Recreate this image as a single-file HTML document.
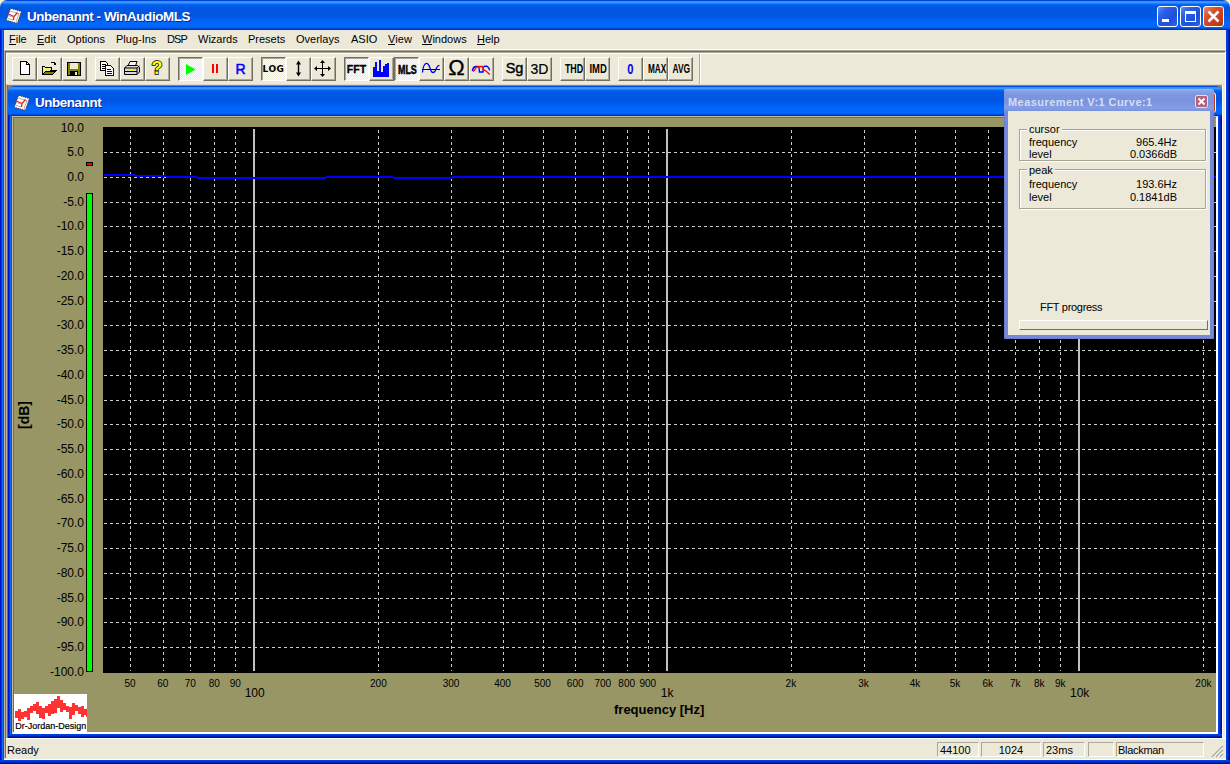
<!DOCTYPE html><html><head><meta charset="utf-8"><title>Unbenannt - WinAudioMLS</title><style>
html,body{margin:0;padding:0}
body{width:1230px;height:764px;position:relative;overflow:hidden;background:#0b3fd6;font-family:"Liberation Sans",sans-serif;font-size:11px;color:#000}
div,span,svg{position:absolute;box-sizing:border-box}
span{white-space:nowrap;line-height:1}
.cap{background:linear-gradient(to bottom,#0046d8 0px,#0046d8 1px,#358cfa 1px,#3d95ff 2.5px,#1a7eff 3.5px,#0468f6 4.5px,#025fec 5.5px,#0058e4 7px,#0056e2 15px,#005aea 17.5px,#0060f4 19.5px,#0066fc 22px,#0066fc 26.5px,#0060f2 27.5px,#004cd8 28.5px,#0032b4 29.5px,#002ea8 30px)}
.ttl{color:#fff;font-weight:bold;font-size:13.4px;letter-spacing:-.41px;text-shadow:1px 1px 0 #0a2a8c}
.m{top:34px;font-size:11px;height:12px}
.m u{text-decoration:none;display:inline-block;height:10px;border-bottom:1px solid #000}
.b{width:25px;height:24px;top:57px;background:#ece9d8;border-top:1px solid #fff;border-left:1px solid #fff;border-right:1px solid #716f64;border-bottom:1px solid #716f64;box-shadow:inset -1px -1px 0 #aca899}
.b.p{border-top:1px solid #716f64;border-left:1px solid #716f64;border-right:1px solid #fff;border-bottom:1px solid #fff;box-shadow:inset 1px 1px 0 #aca899;background:repeating-conic-gradient(#fff 0 25%,#ece9d8 0 50%) 0 0/2px 2px}
.b svg{left:0;top:0}
.bt{font-weight:bold;font-size:11px;left:0;width:23px;text-align:center;top:5px}
.yl{font-size:12px;width:60px;text-align:right;left:24px;height:12px}
.xs{font-size:10px;width:40px;text-align:center;height:10px;top:679px}
.xb{font-size:12px;width:40px;text-align:center;height:12px;top:687px}
.sp{top:742px;height:15px;border-top:1px solid #aca899;border-left:1px solid #aca899;border-right:1px solid #fff;border-bottom:1px solid #fff}
.st{top:745px;font-size:11px}
.pt{font-size:11px;height:11px}
.gb{border:1px solid #a8a594;box-shadow:1px 1px 0 #fff, inset 1px 1px 0 #fff}
</style></head><body>
<div style="left:0;top:0;width:1230px;height:10px;background:#f6f0cc"></div>
<div class="cap" style="left:0;top:0;width:1230px;height:30px;border-radius:7px 7px 0 0"></div>
<div style="left:0;top:30px;width:4px;height:734px;background:linear-gradient(to right,#0013d0 0,#0013d0 1px,#0831d9 1px,#0831d9 2px,#166aee 2px,#166aee 3px,#0050e0 3px)"></div>
<div style="left:1226px;top:30px;width:4px;height:734px;background:linear-gradient(to right,#0040e8 0,#0040e8 1px,#0038d8 1px,#0038d8 2px,#0020b0 2px,#0020b0 3px,#001090 3px)"></div>
<div style="left:0;top:760px;width:1230px;height:4px;background:linear-gradient(to bottom,#0040e8 0,#0040e8 1px,#0038d8 1px,#0038d8 2px,#0020b0 2px,#0020b0 3px,#001090 3px)"></div>
<div style="left:4px;top:30px;width:1222px;height:730px;background:#ece9d8"></div>
<svg style="left:5px;top:7px" width="18" height="18" viewBox="0 0 18 18"><path d="M5.5 1.200 L16.5 4.5 L12.4 16.5 L1.200 13.3 Z" fill="#fff" stroke="#3a3a3a" stroke-width="1" stroke-dasharray="1.5 .7"/><path d="M13.800 6.5 L11 15.5 M4.5 3.800 L14.5 6.800 M3 8.5 L9 10.3 M3 11.5 L8.5 13" stroke="#777" stroke-width=".6" fill="none"/><path d="M3.5 7 L9 9.5 M12.5 5.5 L9 9.5 L8.5 13" stroke="#f02020" stroke-width="1.300" fill="none"/></svg>
<span class="ttl" style="left:27px;top:10px" id="t1">Unbenannt - WinAudioMLS</span>
<div style="left:1157px;top:6px;width:21px;height:21px;border:1px solid #fff;border-radius:3px;background:linear-gradient(135deg,#5d8bf5 0%,#2a5fe6 30%,#1f4fd8 65%,#2a63ee 100%)"><div style="left:4px;top:12px;width:7px;height:3px;background:#fff"></div></div>
<div style="left:1180px;top:6px;width:21px;height:21px;border:1px solid #fff;border-radius:3px;background:linear-gradient(135deg,#5d8bf5 0%,#2a5fe6 30%,#1f4fd8 65%,#2a63ee 100%)"><div style="left:4px;top:4px;width:11px;height:11px;border:1px solid #fff;border-top:3px solid #fff"></div></div>
<div style="left:1203px;top:6px;width:21px;height:21px;border:1px solid #fff;border-radius:3px;background:linear-gradient(135deg,#e98b6f 0%,#d8502c 35%,#c83c18 70%,#b5340f 100%)"><svg style="left:0;top:0" width="19" height="19" viewBox="0 0 19 19"><path d="M4.5 4.5 L14.5 14.5 M14.5 4.5 L4.5 14.5" stroke="#fff" stroke-width="2.5" stroke-linecap="butt"/></svg></div>
<span class="m" id="m0" style="left:9px"><u>F</u>ile</span>
<span class="m" id="m1" style="left:37px"><u>E</u>dit</span>
<span class="m" id="m2" style="left:67px">Options</span>
<span class="m" id="m3" style="left:116px">Plug-Ins</span>
<span class="m" id="m4" style="left:167px;letter-spacing:-.9px">DSP</span>
<span class="m" id="m5" style="left:198px">Wizards</span>
<span class="m" id="m6" style="left:248px">Presets</span>
<span class="m" id="m7" style="left:296px">Overlays</span>
<span class="m" id="m8" style="left:351px">ASIO</span>
<span class="m" id="m9" style="left:388px"><u>V</u>iew</span>
<span class="m" id="m10" style="left:422px"><u>W</u>indows</span>
<span class="m" id="m11" style="left:477px"><u>H</u>elp</span>
<div style="left:4px;top:49px;width:1222px;height:1px;background:#fff"></div>
<div style="left:4px;top:50px;width:1222px;height:1px;background:#aca899"></div>
<div style="left:5px;top:51px;width:1220px;height:1px;background:#716f64"></div>
<div style="left:5px;top:52px;width:1220px;height:1px;background:#aca899"></div>
<div style="left:6px;top:53px;width:1219px;height:1px;background:#fff"></div>
<div style="left:4px;top:51px;width:1px;height:707px;background:#bcb6a2"></div>
<div style="left:5px;top:51px;width:1px;height:707px;background:#716f64"></div>
<div style="left:6px;top:53px;width:1px;height:31px;background:#fff"></div>
<div style="left:699px;top:54px;width:1px;height:30px;background:#aca899"></div>
<div style="left:700px;top:53px;width:1px;height:31px;background:#fff"></div>
<div class="b" style="left:12px"><svg width="22" height="22" viewBox="0 0 22 22" shape-rendering="crispEdges"><path d="M7.5 3.5 H13.5 L16.5 6.5 V16.5 H7.5 Z" fill="#fff" stroke="#000"/><path d="M13.5 3.5 V6.5 H16.5" fill="none" stroke="#000"/></svg></div>
<div class="b" style="left:37px"><svg width="22" height="22" viewBox="0 0 22 22" shape-rendering="crispEdges"><path d="M4.5 9.5 V16.5 H14.5 L18.5 12.5 H8.5 L5.5 15.5" fill="#808000" stroke="#000"/><path d="M4.5 16 V8.5 H6.5 L7.5 9.5 H13.5 V12" fill="#f4f080" stroke="#000"/><path d="M8 13 H18 L14.5 16.5 H5 Z" fill="#808000" stroke="#000"/><path d="M12.5 5.5 Q15.5 2.5 17.5 6.5 M17.5 6.5 V4.5 M17.5 6.5 H15.5" fill="none" stroke="#000"/></svg></div>
<div class="b" style="left:62px"><svg width="22" height="22" viewBox="0 0 22 22" shape-rendering="crispEdges"><rect x="4.5" y="4.5" width="13" height="13" fill="#808000" stroke="#000"/><rect x="7" y="5" width="8" height="6" fill="#ece9d8"/><rect x="7" y="13" width="8" height="4" fill="#000"/><rect x="12" y="14" width="2" height="3" fill="#ece9d8"/></svg></div>
<div class="b" style="left:95px"><svg width="22" height="22" viewBox="0 0 22 22" shape-rendering="crispEdges"><path d="M4.5 3.5 H9.5 L11.5 5.5 V12.5 H4.5 Z" fill="#fff" stroke="#000"/><path d="M6 6.5 H10 M6 8.5 H10 M6 10.5 H10" stroke="#000"/><path d="M9.5 7.5 H14.5 L17.5 10.5 V17.5 H9.5 Z" fill="#fff" stroke="#000080"/><path d="M11 11.5 H15 M11 13.5 H16 M11 15.5 H16" stroke="#000080"/></svg></div>
<div class="b" style="left:120px"><svg width="22" height="22" viewBox="0 0 22 22"><path d="M7 8 L9 3.5 H16 L14.5 8" fill="#fff" stroke="#000"/><path d="M3.5 10 L6 7.5 H16.5 L18.5 9.5 V14 L16 16.5 H3.5 Z" fill="#d8d8d0" stroke="#000"/><path d="M3.5 10 H16 L18.5 8 M16 10 V16.5 M3.5 13.5 H16" fill="none" stroke="#000"/><rect x="8" y="12" width="4" height="1" fill="#ff0"/></svg></div>
<div class="b" style="left:145px"><span style="left:0;top:1px;width:22px;text-align:center;font-weight:bold;font-size:18px;color:#ff0;-webkit-text-stroke:1.5px #000;paint-order:stroke fill;font-family:'Liberation Sans',sans-serif">?</span></div>
<div class="b p" style="left:178px"><svg width="22" height="22" viewBox="0 0 22 22"><path d="M7 6 L16.5 11.5 L7 17 Z" fill="#0f0"/></svg></div>
<div class="b" style="left:203px"><svg width="22" height="22" viewBox="0 0 22 22" shape-rendering="crispEdges"><rect x="8" y="6" width="2" height="9" fill="#f00"/><rect x="12" y="6" width="2" height="9" fill="#f00"/></svg></div>
<div class="b" style="left:228px"><span style="left:0;top:4px;width:23px;text-align:center;font-size:14px;color:#00f;-webkit-text-stroke:.5px #00f">R</span></div>
<div class="b p" style="left:261px"><span class="bt" style="font-size:9px;top:7px;letter-spacing:.5px;font-family:'DejaVu Sans',sans-serif">LOG</span></div>
<div class="b" style="left:286px"><svg width="22" height="22" viewBox="0 0 22 22"><path d="M11.5 5 V17" stroke="#000" stroke-width="1.4"/><path d="M11.5 2.5 L14 6.5 H9 Z M11.5 18.5 L14 14.5 H9 Z" fill="#000"/></svg></div>
<div class="b" style="left:311px"><svg width="22" height="22" viewBox="0 0 22 22" shape-rendering="crispEdges"><path d="M10.5 4 V17 M4 10.5 H17" stroke="#000" stroke-width="1"/><path d="M10.5 2 L13 5 H8 Z M10.5 19 L13 16 H8 Z M2 10.5 L5 8 V13 Z M19 10.5 L16 8 V13 Z" fill="#000" shape-rendering="auto"/></svg></div>
<div class="b p" style="left:344px"><span class="bt" style="font-size:11.5px;top:6px;transform:scaleX(.92);-webkit-text-stroke:.3px #000">FFT</span></div>
<div class="b" style="left:369px"><svg width="22" height="22" viewBox="0 0 22 22" shape-rendering="crispEdges"><path d="M3 19 V9 H5 V4 H7 V13 H9 V2 H11 V14 H13 V8 H15 V6 H17 V5 H19 V19 Z" fill="#00f"/></svg></div>
<div class="b p" style="left:394px"><span class="bt" style="font-size:12px;top:6px;transform:scaleX(.74);-webkit-text-stroke:.5px #000">MLS</span></div>
<div class="b" style="left:419px"><svg width="22" height="22" viewBox="0 0 22 22"><path d="M2 11.5 H20" stroke="#000" stroke-width="1"/><path d="M2.5 14.5 C3.5 3.5 8 3 10 10 C11.5 16 14.5 16 16.5 10 C17.3 8 18.5 7.3 19.5 7.300" fill="none" stroke="#00f" stroke-width="1.3"/></svg></div>
<div class="b" style="left:444px"><span style="left:0;top:-1px;width:23px;text-align:center;font-size:22px;-webkit-text-stroke:.3px #000">Ω</span></div>
<div class="b" style="left:469px"><svg width="22" height="22" viewBox="0 0 22 22"><path d="M2.3 12.8 Q3 9 5.5 8.5 H8 Q9.3 8.5 9.4 14 H13 Q13.2 8.5 14.5 8.3 H17 Q19 9 19.7 12.3" fill="none" stroke="#00f" stroke-width="1.4"/><path d="M2.7 13.4 Q4.5 13 6 9.4 Q8 8.3 12 8.5 Q13 9 13.5 11.9 Q16 12.5 19.7 16.4" fill="none" stroke="#f00" stroke-width="1.4"/></svg></div>
<div class="b" style="left:502px"><span style="left:0;top:3px;width:23px;text-align:center;font-size:14.5px;-webkit-text-stroke:.4px #000">Sg</span></div>
<div class="b" style="left:527px"><span style="left:0;top:4px;width:23px;text-align:center;font-size:14px;-webkit-text-stroke:.2px #000">3D</span></div>
<div class="b" style="left:560px"><span class="bt" style="font-size:13.5px;top:4px;transform:scaleX(.66)">THD</span></div>
<div class="b" style="left:585px"><span class="bt" style="font-size:13.5px;top:4px;transform:scaleX(.7)">IMD</span></div>
<div class="b" style="left:618px"><span class="bt" style="font-size:14px;top:4px;color:#00f;transform:scaleX(.8)">0</span></div>
<div class="b" style="left:643px"><span class="bt" style="font-size:12.5px;top:5px;transform:scaleX(.66)">MAX</span></div>
<div class="b" style="left:668px"><span class="bt" style="font-size:12px;top:5px;transform:scaleX(.7)">AVG</span></div>
<div style="left:6px;top:84px;width:1219px;height:654px;background:#ece9d8"></div>
<div style="left:6px;top:84px;width:1218px;height:1px;background:#dcd8c6"></div>
<div style="left:6px;top:85px;width:1216px;height:1px;background:#8c8878"></div>
<div style="left:6px;top:84px;width:1px;height:654px;background:#b4b0a0"></div>
<div style="left:7px;top:85px;width:1px;height:653px;background:#6e6a5c"></div>
<div style="left:8px;top:86px;width:1214px;height:8px;background:#808080"></div>
<div style="left:1222px;top:85px;width:1px;height:653px;background:#fff"></div>
<div style="left:1225px;top:52px;width:1px;height:686px;background:#fff"></div>
<div style="left:8px;top:86px;width:1214px;height:652px;border-radius:7px 7px 0 0;background:#0a50e0"></div>
<div class="cap" style="left:8px;top:86px;width:1214px;height:30px;border-radius:7px 7px 0 0"></div>
<div style="left:8px;top:116px;width:4px;height:622px;background:linear-gradient(to right,#0013d0 0,#0013d0 1px,#0831d9 1px,#0831d9 2px,#166aee 2px,#166aee 3px,#0050e0 3px)"></div>
<div style="left:1218px;top:116px;width:4px;height:622px;background:linear-gradient(to right,#0040e8 0,#0040e8 1px,#0038d8 1px,#0038d8 2px,#0020b0 2px,#0020b0 3px,#001090 3px)"></div>
<div style="left:8px;top:734px;width:1214px;height:4px;background:linear-gradient(to bottom,#0040e8 0,#0040e8 1px,#0038d8 1px,#0038d8 2px,#0020b0 2px,#0020b0 3px,#001090 3px)"></div>
<svg style="left:13px;top:94px" width="18" height="18" viewBox="0 0 18 18"><path d="M5.5 1.200 L16.5 4.5 L12.4 16.5 L1.200 13.3 Z" fill="#fff" stroke="#3a3a3a" stroke-width="1" stroke-dasharray="1.5 .7"/><path d="M13.800 6.5 L11 15.5 M4.5 3.800 L14.5 6.800 M3 8.5 L9 10.3 M3 11.5 L8.5 13" stroke="#777" stroke-width=".6" fill="none"/><path d="M3.5 7 L9 9.5 M12.5 5.5 L9 9.5 L8.5 13" stroke="#f02020" stroke-width="1.300" fill="none"/></svg>
<span class="ttl" style="left:35px;top:96px" id="t2">Unbenannt</span>
<div style="left:1195px;top:92px;width:21px;height:21px;border:1px solid #fff;border-radius:3px;background:linear-gradient(135deg,#e98b6f 0%,#d8502c 35%,#c83c18 70%,#b5340f 100%)"><svg style="left:0;top:0" width="19" height="19" viewBox="0 0 19 19"><path d="M4.5 4.5 L14.5 14.5 M14.5 4.5 L4.5 14.5" stroke="#fff" stroke-width="2.5" stroke-linecap="butt"/></svg></div>
<div style="left:12px;top:116px;width:1206px;height:618px;background:#979664;border-top:1px solid #c4b99c;border-left:1px solid #c4b99c;border-right:2px solid #fff;border-bottom:2px solid #fff"></div>
<div style="left:13px;top:117px;width:1203px;height:615px;border-top:1px solid #716f64;border-left:1px solid #716f64"></div>
<div style="left:103px;top:127px;width:1113px;height:546px;background:#000"></div>
<svg style="left:0;top:0" width="1230" height="764" viewBox="0 0 1230 764" shape-rendering="crispEdges"><path d="M104 152.5 H1216" stroke="#cdcdcd" stroke-width="1" stroke-dasharray="3 3"/><path d="M104 177.5 H1216" stroke="#cdcdcd" stroke-width="1" stroke-dasharray="3 3"/><path d="M104 202.5 H1216" stroke="#cdcdcd" stroke-width="1" stroke-dasharray="3 3"/><path d="M104 226.5 H1216" stroke="#cdcdcd" stroke-width="1" stroke-dasharray="3 3"/><path d="M104 251.5 H1216" stroke="#cdcdcd" stroke-width="1" stroke-dasharray="3 3"/><path d="M104 276.5 H1216" stroke="#cdcdcd" stroke-width="1" stroke-dasharray="3 3"/><path d="M104 301.5 H1216" stroke="#cdcdcd" stroke-width="1" stroke-dasharray="3 3"/><path d="M104 325.5 H1216" stroke="#cdcdcd" stroke-width="1" stroke-dasharray="3 3"/><path d="M104 350.5 H1216" stroke="#cdcdcd" stroke-width="1" stroke-dasharray="3 3"/><path d="M104 375.5 H1216" stroke="#cdcdcd" stroke-width="1" stroke-dasharray="3 3"/><path d="M104 400.5 H1216" stroke="#cdcdcd" stroke-width="1" stroke-dasharray="3 3"/><path d="M104 424.5 H1216" stroke="#cdcdcd" stroke-width="1" stroke-dasharray="3 3"/><path d="M104 449.5 H1216" stroke="#cdcdcd" stroke-width="1" stroke-dasharray="3 3"/><path d="M104 474.5 H1216" stroke="#cdcdcd" stroke-width="1" stroke-dasharray="3 3"/><path d="M104 499.5 H1216" stroke="#cdcdcd" stroke-width="1" stroke-dasharray="3 3"/><path d="M104 523.5 H1216" stroke="#cdcdcd" stroke-width="1" stroke-dasharray="3 3"/><path d="M104 548.5 H1216" stroke="#cdcdcd" stroke-width="1" stroke-dasharray="3 3"/><path d="M104 573.5 H1216" stroke="#cdcdcd" stroke-width="1" stroke-dasharray="3 3"/><path d="M104 598.5 H1216" stroke="#cdcdcd" stroke-width="1" stroke-dasharray="3 3"/><path d="M104 622.5 H1216" stroke="#cdcdcd" stroke-width="1" stroke-dasharray="3 3"/><path d="M104 647.5 H1216" stroke="#cdcdcd" stroke-width="1" stroke-dasharray="3 3"/><path d="M130.5 130 V671" stroke="#cdcdcd" stroke-width="1" stroke-dasharray="3 3"/><path d="M163.5 130 V671" stroke="#cdcdcd" stroke-width="1" stroke-dasharray="3 3"/><path d="M190.5 130 V671" stroke="#cdcdcd" stroke-width="1" stroke-dasharray="3 3"/><path d="M214.5 130 V671" stroke="#cdcdcd" stroke-width="1" stroke-dasharray="3 3"/><path d="M235.5 130 V671" stroke="#cdcdcd" stroke-width="1" stroke-dasharray="3 3"/><path d="M378.5 130 V671" stroke="#cdcdcd" stroke-width="1" stroke-dasharray="3 3"/><path d="M451.5 130 V671" stroke="#cdcdcd" stroke-width="1" stroke-dasharray="3 3"/><path d="M503.5 130 V671" stroke="#cdcdcd" stroke-width="1" stroke-dasharray="3 3"/><path d="M543.5 130 V671" stroke="#cdcdcd" stroke-width="1" stroke-dasharray="3 3"/><path d="M575.5 130 V671" stroke="#cdcdcd" stroke-width="1" stroke-dasharray="3 3"/><path d="M603.5 130 V671" stroke="#cdcdcd" stroke-width="1" stroke-dasharray="3 3"/><path d="M627.5 130 V671" stroke="#cdcdcd" stroke-width="1" stroke-dasharray="3 3"/><path d="M648.5 130 V671" stroke="#cdcdcd" stroke-width="1" stroke-dasharray="3 3"/><path d="M791.5 130 V671" stroke="#cdcdcd" stroke-width="1" stroke-dasharray="3 3"/><path d="M864.5 130 V671" stroke="#cdcdcd" stroke-width="1" stroke-dasharray="3 3"/><path d="M915.5 130 V671" stroke="#cdcdcd" stroke-width="1" stroke-dasharray="3 3"/><path d="M955.5 130 V671" stroke="#cdcdcd" stroke-width="1" stroke-dasharray="3 3"/><path d="M988.5 130 V671" stroke="#cdcdcd" stroke-width="1" stroke-dasharray="3 3"/><path d="M1015.5 130 V671" stroke="#cdcdcd" stroke-width="1" stroke-dasharray="3 3"/><path d="M1039.5 130 V671" stroke="#cdcdcd" stroke-width="1" stroke-dasharray="3 3"/><path d="M1060.5 130 V671" stroke="#cdcdcd" stroke-width="1" stroke-dasharray="3 3"/><path d="M1203.5 130 V671" stroke="#cdcdcd" stroke-width="1" stroke-dasharray="3 3"/><rect x="253" y="129" width="2" height="542" fill="#c0c0c0"/><rect x="666" y="129" width="2" height="542" fill="#c0c0c0"/><rect x="1078" y="129" width="2" height="542" fill="#c0c0c0"/><rect x="104" y="174" width="31" height="2" fill="#00f"/><rect x="135" y="175" width="31" height="2" fill="#00f"/><rect x="166" y="176" width="31" height="2" fill="#00f"/><rect x="197" y="177" width="129" height="2" fill="#00f"/><rect x="326" y="176" width="67" height="2" fill="#00f"/><rect x="393" y="177" width="59" height="2" fill="#00f"/><rect x="452" y="176" width="764" height="2" fill="#00f"/></svg>
<span class="yl" style="top:122px">10.0</span>
<span class="yl" style="top:146px">5.0</span>
<span class="yl" style="top:171px">0.0</span>
<span class="yl" style="top:196px">-5.0</span>
<span class="yl" style="top:220px">-10.0</span>
<span class="yl" style="top:245px">-15.0</span>
<span class="yl" style="top:270px">-20.0</span>
<span class="yl" style="top:295px">-25.0</span>
<span class="yl" style="top:319px">-30.0</span>
<span class="yl" style="top:344px">-35.0</span>
<span class="yl" style="top:369px">-40.0</span>
<span class="yl" style="top:394px">-45.0</span>
<span class="yl" style="top:418px">-50.0</span>
<span class="yl" style="top:443px">-55.0</span>
<span class="yl" style="top:468px">-60.0</span>
<span class="yl" style="top:493px">-65.0</span>
<span class="yl" style="top:517px">-70.0</span>
<span class="yl" style="top:542px">-75.0</span>
<span class="yl" style="top:567px">-80.0</span>
<span class="yl" style="top:592px">-85.0</span>
<span class="yl" style="top:616px">-90.0</span>
<span class="yl" style="top:641px">-95.0</span>
<span class="yl" style="top:666px">-100.0</span>
<div style="left:86px;top:162px;width:7px;height:4px;background:#f00;border:1px solid #000"></div>
<div style="left:86px;top:193px;width:7px;height:479px;background:#0f0;border:1px solid #000"></div>
<span style="left:24px;top:415px;font-weight:bold;font-size:14px;transform:translate(-50%,-50%) rotate(-90deg)">[dB]</span>
<span class="xs" style="left:110.0px">50</span>
<span class="xs" style="left:142.7px">60</span>
<span class="xs" style="left:170.3px">70</span>
<span class="xs" style="left:194.2px">80</span>
<span class="xs" style="left:215.3px">90</span>
<span class="xs" style="left:358.4px">200</span>
<span class="xs" style="left:431.0px">300</span>
<span class="xs" style="left:482.5px">400</span>
<span class="xs" style="left:522.5px">500</span>
<span class="xs" style="left:555.2px">600</span>
<span class="xs" style="left:582.8px">700</span>
<span class="xs" style="left:606.7px">800</span>
<span class="xs" style="left:627.8px">900</span>
<span class="xs" style="left:770.9px">2k</span>
<span class="xs" style="left:843.5px">3k</span>
<span class="xs" style="left:895.0px">4k</span>
<span class="xs" style="left:935.0px">5k</span>
<span class="xs" style="left:967.7px">6k</span>
<span class="xs" style="left:995.3px">7k</span>
<span class="xs" style="left:1019.2px">8k</span>
<span class="xs" style="left:1040.3px">9k</span>
<span class="xs" style="left:1183.4px">20k</span>
<span class="xb" style="left:234.7px">100</span>
<span class="xb" style="left:647.2px">1k</span>
<span class="xb" style="left:1059.7px">10k</span>
<span style="left:614px;top:703px;font-weight:bold;font-size:13px" id="fl">frequency [Hz]</span>
<svg style="left:14px;top:694px" width="73" height="38" viewBox="0 0 73 38" shape-rendering="crispEdges"><rect width="73" height="38" fill="#fff"/><rect x="1" y="17" width="3" height="7" fill="#f33"/><rect x="4" y="15" width="3" height="12" fill="#f33"/><rect x="7" y="18" width="3" height="7" fill="#f33"/><rect x="10" y="17" width="3" height="6" fill="#f33"/><rect x="13" y="14" width="3" height="12" fill="#f33"/><rect x="16" y="12" width="3" height="7" fill="#f33"/><rect x="19" y="10" width="3" height="7" fill="#f33"/><rect x="22" y="8" width="3" height="12" fill="#f33"/><rect x="25" y="12" width="3" height="12" fill="#f33"/><rect x="28" y="14" width="3" height="11" fill="#f33"/><rect x="31" y="12" width="3" height="7" fill="#f33"/><rect x="34" y="10" width="3" height="12" fill="#f33"/><rect x="37" y="7" width="3" height="13" fill="#f33"/><rect x="40" y="5" width="3" height="14" fill="#f33"/><rect x="43" y="2" width="3" height="12" fill="#f33"/><rect x="46" y="6" width="3" height="12" fill="#f33"/><rect x="49" y="9" width="3" height="7" fill="#f33"/><rect x="52" y="12" width="3" height="6" fill="#f33"/><rect x="55" y="13" width="3" height="12" fill="#f33"/><rect x="58" y="9" width="3" height="12" fill="#f33"/><rect x="61" y="11" width="3" height="6" fill="#f33"/><rect x="64" y="13" width="3" height="7" fill="#f33"/><rect x="67" y="12" width="3" height="11" fill="#f33"/><rect x="70" y="15" width="3" height="6" fill="#f33"/><rect x="72" y="17" width="1" height="6" fill="#f33"/><text x="1.300" y="35" font-family="'Liberation Sans',sans-serif" font-size="9" textLength="71" lengthAdjust="spacingAndGlyphs" fill="#000" stroke="#000" stroke-width=".2" shape-rendering="auto">Dr-Jordan-Design</text></svg>
<div style="left:1004px;top:89px;width:210px;height:250px;background:#7588da;border:1px solid #6c7dd2;border-radius:2px 2px 0 0"></div>
<div style="left:1004px;top:89px;width:210px;height:22px;background:linear-gradient(to bottom,#a0b4ec 0,#86a2e6 2px,#7c97e0 6px,#7b93dd 13px,#84a0e4 19px,#7a90dc 22px);border-radius:2px 2px 0 0"></div>
<div style="left:1008px;top:111px;width:202px;height:224px;background:#ece9d8"></div>
<span id="pt" style="left:1008px;top:97px;font-weight:bold;font-size:11px;letter-spacing:.44px;color:#d4def6">Measurement V:1 Curve:1</span>
<div style="left:1195px;top:95px;width:13px;height:13px;border:1px solid #e8dcec;border-radius:2px;background:#b5627b"><svg style="left:0;top:0" width="11" height="10" viewBox="0 0 11 10"><path d="M2.5 2.5 L8.5 8.5 M8.5 2.5 L2.5 8.5" stroke="#fff" stroke-width="1.8"/></svg></div>
<div class="gb" style="left:1019px;top:129px;width:187px;height:32px"></div>
<div class="gb" style="left:1019px;top:169px;width:187px;height:40px"></div>
<span class="pt" style="left:1027px;top:124px;background:#ece9d8;padding:0 2px">cursor</span>
<span class="pt" style="left:1027px;top:165px;background:#ece9d8;padding:0 2px">peak</span>
<span class="pt" style="left:1029px;top:137px">frequency</span>
<span class="pt" style="left:1097px;width:80px;text-align:right;top:137px">965.4Hz</span>
<span class="pt" style="left:1029px;top:149px">level</span>
<span class="pt" style="left:1097px;width:80px;text-align:right;top:149px">0.0366dB</span>
<span class="pt" style="left:1029px;top:179px">frequency</span>
<span class="pt" style="left:1097px;width:80px;text-align:right;top:179px">193.6Hz</span>
<span class="pt" style="left:1029px;top:192px">level</span>
<span class="pt" style="left:1097px;width:80px;text-align:right;top:192px">0.1841dB</span>
<span class="pt" style="left:1040px;top:302px;letter-spacing:-.3px">FFT progress</span>
<div style="left:1019px;top:320px;width:189px;height:10px;border-top:1px solid #fff;border-left:1px solid #fff;border-right:1px solid #716f64;border-bottom:1px solid #716f64"></div>
<div style="left:6px;top:738px;width:1220px;height:22px;background:#ece9d8;border-top:1px solid #fff"></div>
<div style="left:4px;top:758px;width:1222px;height:2px;background:#ece9d8;border-bottom:1px solid #fff"></div>
<span class="st" style="left:7px">Ready</span>
<div class="sp" style="left:937px;width:42px"></div>
<span class="st" style="left:940px">44100</span>
<div class="sp" style="left:981px;width:60px"></div>
<span class="st" style="left:981px;width:60px;text-align:center">1024</span>
<div class="sp" style="left:1043px;width:42px"></div>
<span class="st" style="left:1046px">23ms</span>
<div class="sp" style="left:1088px;width:26px"></div>
<div class="sp" style="left:1116px;width:88px"></div>
<span class="st" style="left:1118px;letter-spacing:-.3px">Blackman</span>
<svg style="left:1211px;top:745px" width="13" height="13" viewBox="0 0 13 13"><path d="M12 1 L1 12 M12 5 L5 12 M12 9 L9 12" stroke="#aca899" stroke-width="1.5"/><path d="M12 2.5 L2.5 12 M12 6.5 L6.5 12 M12 10.5 L10.5 12" stroke="#fff" stroke-width="1"/></svg>
</body></html>
